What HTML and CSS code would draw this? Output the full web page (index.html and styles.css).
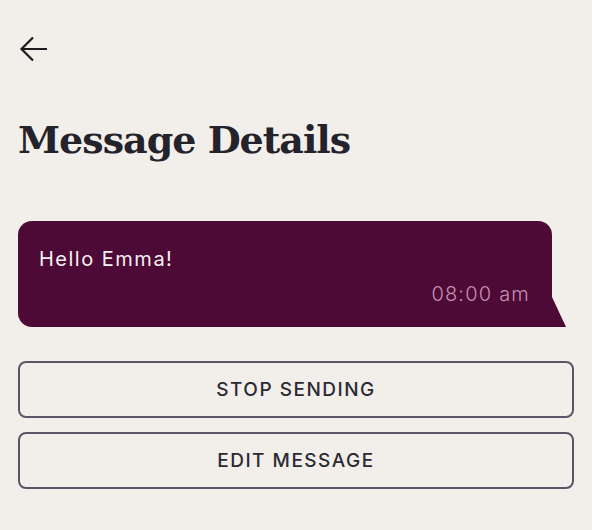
FILE: index.html
```html
<!DOCTYPE html>
<html>
<head>
<meta charset="utf-8">
<link rel="stylesheet" href="styles.css">
</head>
<body>
<div class="page">
  <div class="topbar">
    <svg class="back" width="30" height="26" viewBox="0 0 30 26"><path d="M28 13H3M14 1.5L2.5 13L14 24.5" fill="none" stroke="#1c1b20" stroke-width="2.2"/></svg>
  </div>
  <h1 class="title">Message Details</h1>
  <div class="bubble">
    <div class="msg">Hello Emma!</div>
    <div class="time">08:00 am</div>
    <svg class="tail" width="20" height="32" viewBox="0 0 20 32"><path d="M0 0 L5 2 L19 32 L0 32 Z" fill="#4d0a36"/></svg>
  </div>
  <div class="actions">
    <button class="btn">STOP SENDING</button>
    <button class="btn">EDIT MESSAGE</button>
  </div>
</div>
</body>
</html>
```
FILE: styles.css
```css
html, body { margin: 0; padding: 0; background: #f2efea; }
.page { padding: 0 18px 0 18px; font-family: "Inter", "Liberation Sans", sans-serif; }
.topbar { height: 72px; display: flex; align-items: flex-start; padding-top: 36px; box-sizing: border-box; }
.back { display: block; margin-left: 1px; }
.title { margin: 40px 0 0 0; font-family: "DejaVu Serif", serif; font-weight: bold; font-size: 38px; line-height: 56px; color: #24232b; letter-spacing: -1px; }
.bubble { position: relative; margin-top: 53px; width: 534px; height: 106px; box-sizing: border-box; background: #4d0a36; border-radius: 14px 14px 0 14px; padding: 26px 22px 0 21px; }
.msg { color: #f6f0f3; font-size: 20px; line-height: 24px; letter-spacing: 1.5px; font-weight: 400; }
.time { color: #c58fb0; font-size: 20px; line-height: 24px; text-align: right; margin-top: 11px; letter-spacing: 1.2px; font-weight: 350; }
.tail { position: absolute; right: -15px; bottom: 0; }
.actions { display: flex; flex-direction: column; gap: 14px; margin-top: 34px; }
.btn { height: 57px; border: 2px solid #5b5566; border-radius: 8px; background: transparent; font-family: "Inter", "Liberation Sans", sans-serif; font-size: 19px; letter-spacing: 1.5px; color: #2b2a33; font-weight: 500; }
```
